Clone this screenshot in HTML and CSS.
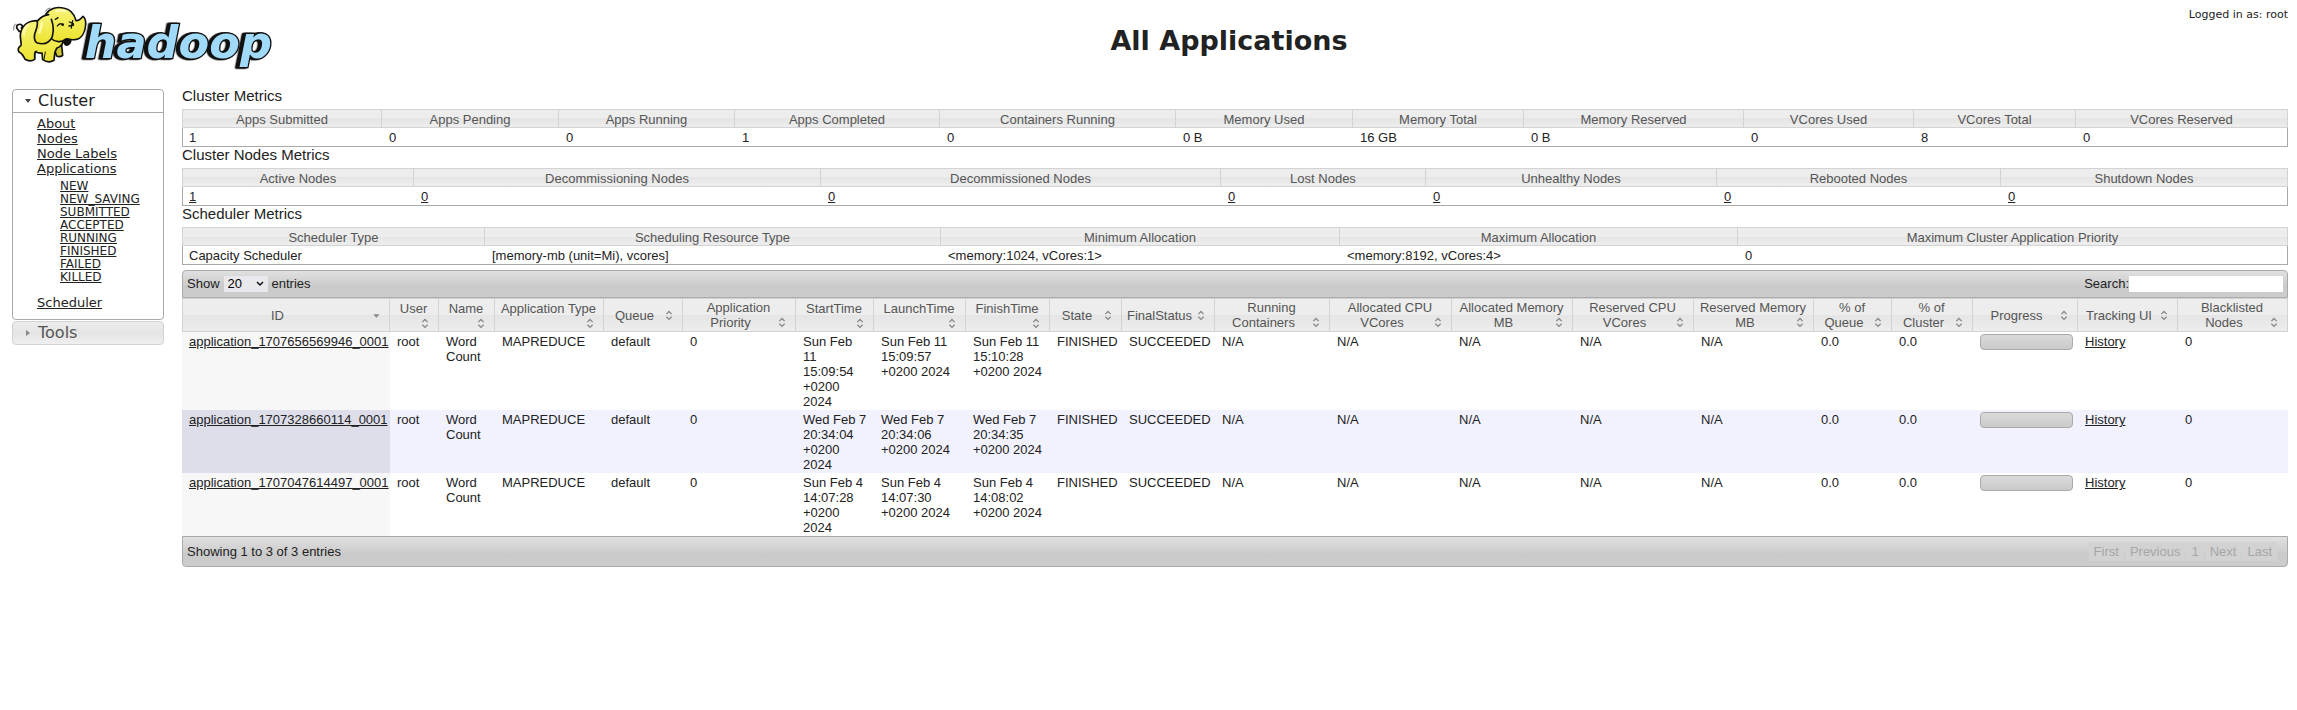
FILE: index.html
```html
<!DOCTYPE html>
<html lang="en">
<head>
<meta charset="utf-8">
<title>All Applications</title>
<link rel="stylesheet" href="styles.css">
</head>
<body>
<svg class="defs" aria-hidden="true">
  <symbol id="both" viewBox="0 0 16 16"><path d="M5 7 8 4l3 3M5 10l3 3 3-3" fill="none" stroke="#888" stroke-width="1.5"/></symbol>
  <symbol id="down" viewBox="0 0 16 16"><path d="M5 7h7l-3.500 4z" fill="#888"/></symbol>
</svg>
<header class="header">
  <a class="logo" href="#" aria-label="Hadoop">
    <svg class="logo-art" viewBox="0 0 870 240">
      <defs><linearGradient id="skin" x1="0" y1="0" x2="0" y2="1"><stop offset="0" stop-color="#f8f47a"/><stop offset="1" stop-color="#ebe32c"/></linearGradient></defs>
      <g class="word"><text x="254" y="174">hadoop</text></g>
      <g stroke="#111" stroke-width="5" stroke-linejoin="round" stroke-linecap="round" fill="url(#skin)">
        <path d="M66 98C50 92 46 78 54 74c9-4 18 4 10 10" fill="none"/>
        <path d="M160 140l10 28q10 5 18-2l-4-40z" fill="#cfc92f"/>
        <path d="M112 62C82 62 64 78 61 104c-1 14 4 24 2 32-8 6-10 14-6 20 8 4 14 12 18 22 10 6 22 5 29 0 1-10-2-17 2-23 8 5 14 5 20 4l2 20c10 7 24 8 34 2 2-12 0-24 8-36 14-6 20-16 20-26z"/>
        <path d="M190 120c2 14 8 19 16 13 6-4 7-10 5-17z" fill="#111"/>
        <path d="M138 42C150 24 172 20 190 24c20 3 33 17 38 38 9 1 14-4 21-13 7 5 9 13 8 26-2 22-12 42-32 44-12 2-20-5-28-2-12 12-32 10-46-3z"/>
        <path d="M146 44c-14 2-26 9-34 20 2 14-4 26-8 38-2 12-2 20 6 26 12 4 26 4 34-2 9-6 13-12 14-22 4-16 1-32-4-46"/>
        <path d="M172 78q6-9 13-6M166 58l8-5M208 66l12 5M207 78l14-3M218 62l-4 22" fill="none" stroke-width="4"/>
        <circle cx="188" cy="74" r="4" fill="#111" stroke="none"/>
        <path d="M136 34q5-9 14-10M41 90q-2-12 5-18" fill="none" stroke="#777" stroke-width="3"/>
        <path d="M104 178q-2-18 6-26M76 178q-4-8-10-12M132 178l4-22" fill="none" stroke-width="3"/>
        <path d="M84 76q-12 10-13 28M168 34q14-6 28 0M126 68q-2 16-8 30" fill="none" stroke="#fffbb0" stroke-width="7"/>
      </g>
    </svg>
  </a>
  <h1 class="title">All Applications</h1>
  <div class="user">Logged in as: root</div>
</header>
<div class="layout">
  <nav class="sidebar">
    <section class="panel open">
      <h3 class="panel-head"><button type="button"><svg class="tri" viewBox="0 0 8 8"><path d="M1 2h6L4 6z" fill="#454545"/></svg>Cluster</button></h3>
      <ul class="links">
        <li><a href="#">About</a></li>
        <li><a href="#">Nodes</a></li>
        <li><a href="#">Node Labels</a></li>
        <li><a href="#">Applications</a>
          <ul class="states">
            <li><a href="#">NEW</a></li>
            <li><a href="#">NEW_SAVING</a></li>
            <li><a href="#">SUBMITTED</a></li>
            <li><a href="#">ACCEPTED</a></li>
            <li><a href="#">RUNNING</a></li>
            <li><a href="#">FINISHED</a></li>
            <li><a href="#">FAILED</a></li>
            <li><a href="#">KILLED</a></li>
          </ul>
        </li>
        <li><a href="#">Scheduler</a></li>
      </ul>
    </section>
    <section class="panel">
      <h3 class="panel-head"><button type="button"><svg class="tri" viewBox="0 0 8 8"><path d="M2 1v6l4-3z" fill="#888"/></svg>Tools</button></h3>
    </section>
  </nav>
  <main class="main">
    <h2 class="section">Cluster Metrics</h2>
    <table class="metrics cluster">
      <thead><tr><th>Apps Submitted</th><th>Apps Pending</th><th>Apps Running</th><th>Apps Completed</th><th>Containers Running</th><th>Memory Used</th><th>Memory Total</th><th>Memory Reserved</th><th>VCores Used</th><th>VCores Total</th><th>VCores Reserved</th></tr></thead>
      <tbody><tr><td>1</td><td>0</td><td>0</td><td>1</td><td>0</td><td>0 B</td><td>16 GB</td><td>0 B</td><td>0</td><td>8</td><td>0</td></tr></tbody>
    </table>
    <h2 class="section">Cluster Nodes Metrics</h2>
    <table class="metrics nodes">
      <thead><tr><th>Active Nodes</th><th>Decommissioning Nodes</th><th>Decommissioned Nodes</th><th>Lost Nodes</th><th>Unhealthy Nodes</th><th>Rebooted Nodes</th><th>Shutdown Nodes</th></tr></thead>
      <tbody><tr><td><a href="#">1</a></td><td><a href="#">0</a></td><td><a href="#">0</a></td><td><a href="#">0</a></td><td><a href="#">0</a></td><td><a href="#">0</a></td><td><a href="#">0</a></td></tr></tbody>
    </table>
    <h2 class="section">Scheduler Metrics</h2>
    <table class="metrics scheduler">
      <thead><tr><th>Scheduler Type</th><th>Scheduling Resource Type</th><th>Minimum Allocation</th><th>Maximum Allocation</th><th>Maximum Cluster Application Priority</th></tr></thead>
      <tbody><tr><td>Capacity Scheduler</td><td>[memory-mb (unit=Mi), vcores]</td><td>&lt;memory:1024, vCores:1&gt;</td><td>&lt;memory:8192, vCores:4&gt;</td><td>0</td></tr></tbody>
    </table>
    <div class="bar bar-top">
      <div class="length"><label for="len">Show</label>
        <span class="pick"><select id="len"><option>20</option><option>40</option></select><svg viewBox="0 0 8 6"><path d="M1 1l3 3 3-3" fill="none" stroke="#111" stroke-width="1.5"/></svg></span>
        <span>entries</span></div>
      <div class="search"><label for="q">Search:</label><input id="q" type="text"></div>
    </div>
    <table class="apps">
      <thead><tr>
        <th><button type="button">ID<svg><use href="#down"/></svg></button></th>
        <th><button type="button">User<svg><use href="#both"/></svg></button></th>
        <th><button type="button">Name<svg><use href="#both"/></svg></button></th>
        <th><button type="button">Application Type<svg><use href="#both"/></svg></button></th>
        <th><button type="button">Queue<svg><use href="#both"/></svg></button></th>
        <th><button type="button">Application<br>Priority<svg><use href="#both"/></svg></button></th>
        <th><button type="button">StartTime<svg><use href="#both"/></svg></button></th>
        <th><button type="button">LaunchTime<svg><use href="#both"/></svg></button></th>
        <th><button type="button">FinishTime<svg><use href="#both"/></svg></button></th>
        <th><button type="button">State<svg><use href="#both"/></svg></button></th>
        <th><button type="button">FinalStatus<svg><use href="#both"/></svg></button></th>
        <th><button type="button">Running<br>Containers<svg><use href="#both"/></svg></button></th>
        <th><button type="button">Allocated CPU<br>VCores<svg><use href="#both"/></svg></button></th>
        <th><button type="button">Allocated Memory<br>MB<svg><use href="#both"/></svg></button></th>
        <th><button type="button">Reserved CPU<br>VCores<svg><use href="#both"/></svg></button></th>
        <th><button type="button">Reserved Memory<br>MB<svg><use href="#both"/></svg></button></th>
        <th><button type="button">% of<br>Queue<svg><use href="#both"/></svg></button></th>
        <th><button type="button">% of<br>Cluster<svg><use href="#both"/></svg></button></th>
        <th><button type="button">Progress<svg><use href="#both"/></svg></button></th>
        <th><button type="button">Tracking UI<svg><use href="#both"/></svg></button></th>
        <th><button type="button">Blacklisted<br>Nodes<svg><use href="#both"/></svg></button></th>
      </tr></thead>
      <tbody>
        <tr><td><a href="#">application_1707656569946_0001</a></td><td>root</td><td>Word<br>Count</td><td>MAPREDUCE</td><td>default</td><td>0</td><td>Sun Feb<br>11<br>15:09:54<br>+0200<br>2024</td><td>Sun Feb 11<br>15:09:57<br>+0200 2024</td><td>Sun Feb 11<br>15:10:28<br>+0200 2024</td><td>FINISHED</td><td>SUCCEEDED</td><td>N/A</td><td>N/A</td><td>N/A</td><td>N/A</td><td>N/A</td><td>0.0</td><td>0.0</td><td><div class="progress" role="progressbar" aria-label="Progress" aria-valuenow="100"></div></td><td><a href="#">History</a></td><td>0</td></tr>
        <tr><td><a href="#">application_1707328660114_0001</a></td><td>root</td><td>Word<br>Count</td><td>MAPREDUCE</td><td>default</td><td>0</td><td>Wed Feb 7<br>20:34:04<br>+0200<br>2024</td><td>Wed Feb 7<br>20:34:06<br>+0200 2024</td><td>Wed Feb 7<br>20:34:35<br>+0200 2024</td><td>FINISHED</td><td>SUCCEEDED</td><td>N/A</td><td>N/A</td><td>N/A</td><td>N/A</td><td>N/A</td><td>0.0</td><td>0.0</td><td><div class="progress" role="progressbar" aria-label="Progress" aria-valuenow="100"></div></td><td><a href="#">History</a></td><td>0</td></tr>
        <tr><td><a href="#">application_1707047614497_0001</a></td><td>root</td><td>Word<br>Count</td><td>MAPREDUCE</td><td>default</td><td>0</td><td>Sun Feb 4<br>14:07:28<br>+0200<br>2024</td><td>Sun Feb 4<br>14:07:30<br>+0200 2024</td><td>Sun Feb 4<br>14:08:02<br>+0200 2024</td><td>FINISHED</td><td>SUCCEEDED</td><td>N/A</td><td>N/A</td><td>N/A</td><td>N/A</td><td>N/A</td><td>0.0</td><td>0.0</td><td><div class="progress" role="progressbar" aria-label="Progress" aria-valuenow="100"></div></td><td><a href="#">History</a></td><td>0</td></tr>
      </tbody>
    </table>
    <div class="bar bar-bottom">
      <div>Showing 1 to 3 of 3 entries</div>
      <div class="pages"><button type="button" disabled>First</button><button type="button" disabled>Previous</button><button type="button" disabled>1</button><button type="button" disabled>Next</button><button type="button" disabled>Last</button></div>
    </div>
  </main>
</div>
</body>
</html>
```
FILE: styles.css
```css
* { box-sizing: border-box; }
body { margin: 0; background: #fff; color: #222; font: 13px/15px "Liberation Sans", Arial, sans-serif; }
a { color: #222; text-decoration: underline; }
button { font: inherit; color: inherit; background: none; border: 0; padding: 0; margin: 0; }
ul { list-style: none; margin: 0; padding: 0; }
.defs { position: absolute; width: 0; height: 0; }

.header { display: grid; grid-template-columns: 170px 1fr; padding-right: 9px; height: 88px; font-family: Verdana, "DejaVu Sans", sans-serif; }
.logo { width: 290px; height: 80px; }
.logo-art { display: block; width: 290px; height: 80px; }
.word { filter: drop-shadow(-6px 1px 0 #111) drop-shadow(-4px 0 0 #111); }
.word text { font: italic bold 134px "DejaVu Sans", sans-serif; fill: #a0daf8; stroke: #111; stroke-width: 8px; paint-order: stroke; }
.title { grid-area: 1 / 2; justify-self: center; margin: 0; padding-top: 25px; font-size: 27px; line-height: 32px; font-weight: bold; }
.user { grid-area: 1 / 2; justify-self: end; padding-top: 8px; font-size: 11px; line-height: 13px; }

.layout { display: grid; grid-template-columns: 152px minmax(0, 1fr); gap: 18px; padding: 0 9px 0 12px; align-items: start; }

.sidebar { padding-top: 1px; font-family: Verdana, "DejaVu Sans", sans-serif; font-size: 13px; }
.panel { border: 1px solid #d3d3d3; border-radius: 4px; margin-bottom: 1px; background: linear-gradient(#ededed, #e4e4e4 50%, #efefef); color: #555; }
.panel.open { border-color: #aaa; background: #fff; color: #222; }
.panel-head { margin: 0; font-size: 16px; line-height: 22px; font-weight: normal; }
.panel-head button { display: flex; align-items: center; width: 100%; padding-left: 11px; gap: 6px; text-align: left; }
.open .panel-head { border-bottom: 1px solid #aaa; }
.tri { width: 8px; height: 8px; }
.links { padding: 3px 0 9px 24px; }
.states { padding: 4px 0 11px 23px; font-size: 12px; line-height: 13px; }

.section { margin: 0; padding-bottom: 5px; font-size: 15px; line-height: 16px; font-weight: normal; }
table { width: 100%; table-layout: fixed; border-spacing: 0; }
th { padding: 2px 5px 0; font-weight: normal; color: #555; text-align: center; background: linear-gradient(#ededed, #ededed 50%, #e5e5e5 50%, #ededed); border: 1px solid #d3d3d3; border-left: 0; }
th:first-child { border-left: 1px solid #d3d3d3; }
td { padding: 2px 7px 1px; white-space: nowrap; vertical-align: top; }
td:first-child { padding-left: 6px; }
.metrics td { border-bottom: 1px solid #aaa; }
.metrics td:first-child { border-left: 1px solid #aaa; }
.metrics td:last-child { border-right: 1px solid #aaa; }

.cluster th:nth-child(1) { width: 200px; }
.cluster th:nth-child(2) { width: 177px; }
.cluster th:nth-child(3) { width: 176px; }
.cluster th:nth-child(4) { width: 205px; }
.cluster th:nth-child(5) { width: 236px; }
.cluster th:nth-child(6) { width: 177px; }
.cluster th:nth-child(7) { width: 171px; }
.cluster th:nth-child(8) { width: 220px; }
.cluster th:nth-child(9) { width: 170px; }
.cluster th:nth-child(10) { width: 162px; }
.cluster th:nth-child(11) { width: 212px; }

.nodes th:nth-child(1) { width: 232px; }
.nodes th:nth-child(2) { width: 407px; }
.nodes th:nth-child(3) { width: 400px; }
.nodes th:nth-child(4) { width: 205px; }
.nodes th:nth-child(5) { width: 291px; }
.nodes th:nth-child(6) { width: 284px; }
.nodes th:nth-child(7) { width: 287px; }

.scheduler { margin-bottom: 5px; }
.scheduler th:nth-child(1) { width: 303px; }
.scheduler th:nth-child(2) { width: 456px; }
.scheduler th:nth-child(3) { width: 399px; }
.scheduler th:nth-child(4) { width: 398px; }
.scheduler th:nth-child(5) { width: 550px; }

.bar { display: flex; justify-content: space-between; align-items: center; border: 1px solid #aaa; background: linear-gradient(#e0e0e0, #cacaca 60%, #cccccc); padding: 5px 4px; }
.bar-top { border-radius: 4px 4px 0 0; }
.bar-bottom { border-radius: 0 0 4px 4px; padding-right: 10px; }
.length { display: flex; gap: 4px; line-height: 15px; }
.pick { position: relative; display: flex; }
.pick svg { position: absolute; right: 4px; top: 5px; width: 8px; height: 6px; pointer-events: none; }
select { appearance: none; width: 44px; height: 16px; border: 0; padding: 0 4px; background: #e9e9ed; color: #000; font: 13px/16px "Liberation Sans", Arial, sans-serif; }
.search { display: flex; }
.search input { width: 154px; height: 16px; border: 0; padding: 0 2px; background: #fff; font: inherit; }

.apps th { padding: 1px 5px 1px 4px; }
.apps th button { display: block; width: 100%; white-space: nowrap; text-align: center; }
.apps th svg { float: right; width: 16px; height: 14px; }
.apps th:nth-child(1) { width: 208px; }
.apps th:nth-child(2) { width: 49px; }
.apps th:nth-child(3) { width: 56px; }
.apps th:nth-child(4) { width: 109px; }
.apps th:nth-child(5) { width: 79px; }
.apps th:nth-child(6) { width: 113px; }
.apps th:nth-child(7) { width: 78px; }
.apps th:nth-child(8) { width: 92px; }
.apps th:nth-child(9) { width: 84px; }
.apps th:nth-child(10) { width: 72px; }
.apps th:nth-child(11) { width: 93px; }
.apps th:nth-child(12) { width: 115px; }
.apps th:nth-child(13) { width: 122px; }
.apps th:nth-child(14) { width: 121px; }
.apps th:nth-child(15) { width: 121px; }
.apps th:nth-child(16) { width: 120px; }
.apps th:nth-child(17) { width: 78px; }
.apps th:nth-child(18) { width: 81px; }
.apps th:nth-child(19) { width: 105px; }
.apps th:nth-child(20) { width: 100px; }
.apps th:nth-child(21) { width: 110px; }
.apps td:first-child { padding-left: 7px; background: #f7f7f7; }
.apps tr:nth-child(even) td { background: #f2f2ff; }
.apps tr:nth-child(even) td:first-child { background: #dedeeb; }
.progress { height: 16px; width: 93px; border: 1px solid #aaa; border-radius: 4px; background: linear-gradient(#dadada, #cacaca); }

.pages { display: flex; gap: 1px; }
.pages button { padding: 2px 5px; color: #a6a6a6; background: #d2d2d2; }
```
